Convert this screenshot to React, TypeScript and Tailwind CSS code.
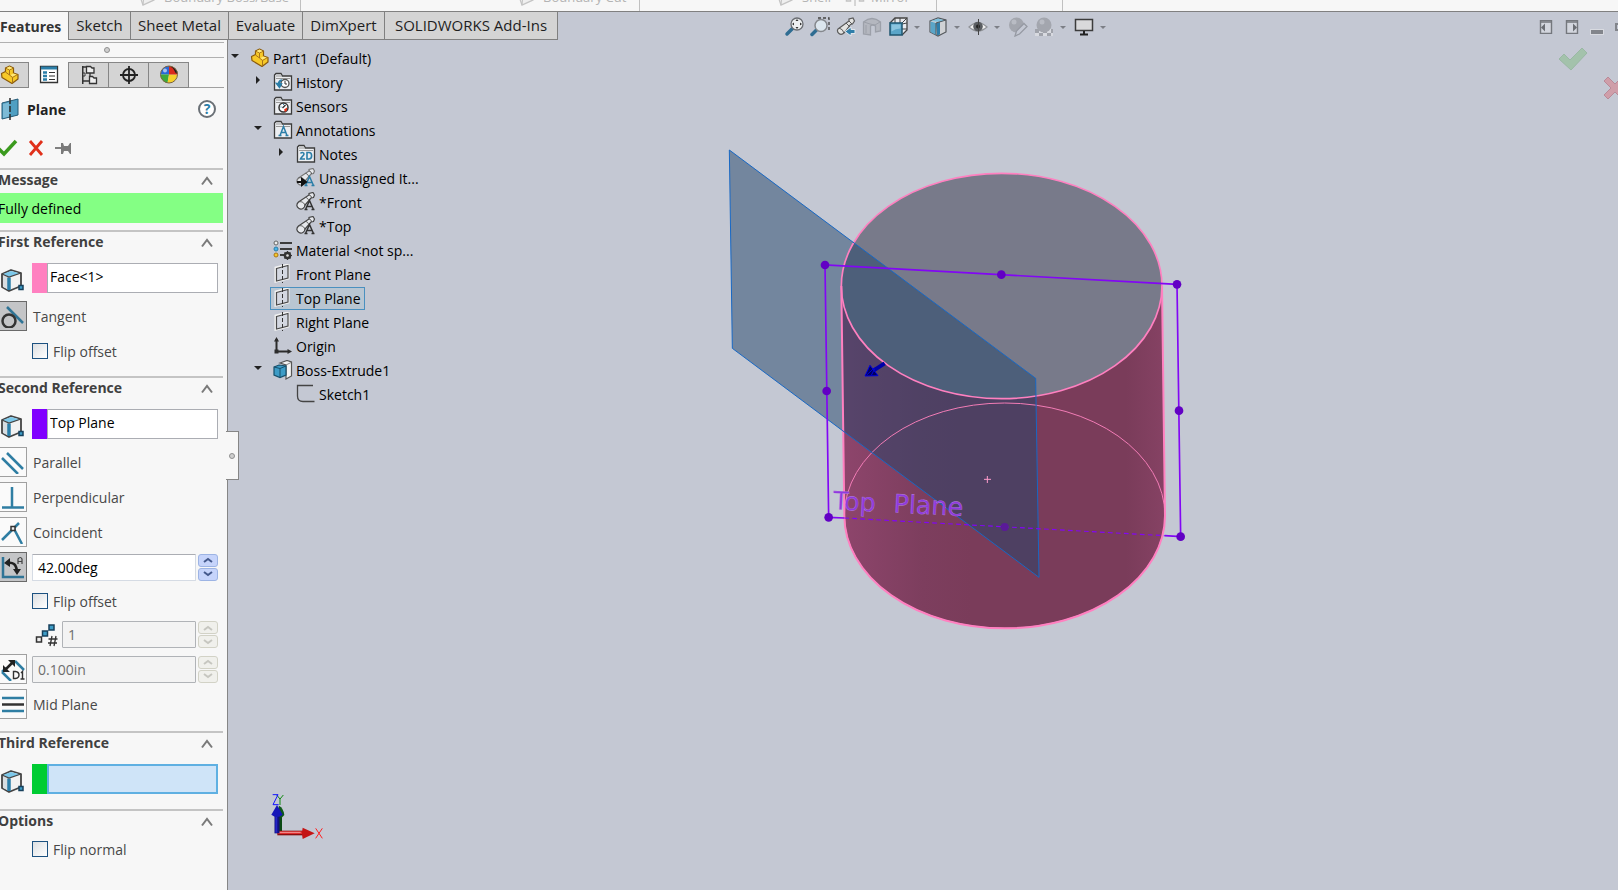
import { useState } from 'react'
import type { ReactNode } from 'react'

interface IconProps {
  size?: number
  className?: string
  children: ReactNode
}

function Icon({ size = 20, className = '', children }: IconProps) {
  return (
    <svg
      width={size}
      height={size}
      viewBox={`0 0 ${size} ${size}`}
      fill="none"
      aria-hidden="true"
      className={`shrink-0 ${className}`}
    >
      {children}
    </svg>
  )
}

/* ---------- shared glyphs ---------- */

function PartIcon() {
  return (
    <Icon>
      <path
        d="M1.5 8.5l4-2V3l4-2 4 2v5l4.500 1.500V14L12 18.500l-10-6z"
        fill="#f7c928"
        stroke="#8a5a0c"
        strokeWidth="1.2"
        strokeLinejoin="round"
      />
      <path d="M5.500 3l4 2 4-2M9.500 5v5l-4-3M9.500 10l3 2.500 5-3M12.500 12.500V18" stroke="#a8741a" />
      <path d="M6.500 3l3-1.500 3 1.500-3 1.500z" fill="#ffe97c" />
      <path d="M10.500 10l3-1.500 3 1-4 2z" fill="#ffe97c" />
    </Icon>
  )
}

function Folder({ children }: { children: ReactNode }) {
  return (
    <Icon>
      <path d="M1.5 18V3L3 1.5h5L9.5 4h9v14z" fill="#eceef1" stroke="#3c3c3c" strokeWidth="1.3" />
      <path d="M3 4h6M3 6.5h14" stroke="#9a9a9a" />
      {children}
    </Icon>
  )
}

function HistoryIcon() {
  return (
    <Folder>
      <circle cx="12" cy="11.5" r="4" fill="#fff" stroke="#555" strokeWidth="1.4" />
      <path d="M12 9v3h2" stroke="#333" />
      <path d="M9 8c-3 0-4 3-3 5M3.5 11.5l3 4 2-3.5z" stroke="#2b7ea8" strokeWidth="1.5" fill="#2b7ea8" />
    </Folder>
  )
}

function SensorsIcon() {
  return (
    <Folder>
      <circle cx="10.5" cy="11.5" r="4.5" fill="#fff" stroke="#333" strokeWidth="1.5" />
      <path d="M9.5 12l3-3" stroke="#333" strokeWidth="1.5" />
      <path d="M11 13.5l3-2v3L12 16z" fill="#e8321a" />
      <path d="M7.5 11h1M10 8.5h1" stroke="#2b7ea8" />
    </Folder>
  )
}

function AnnotationsIcon() {
  return (
    <Folder>
      <path d="M7 15.5l3.5-9 3.5 9M8 12.5h5M5.5 15.5h3M12.5 15.5h3" stroke="#2b7ea8" strokeWidth="1.5" />
    </Folder>
  )
}

function NotesIcon() {
  return (
    <Folder>
      <path
        d="M4.5 9.5c.5-1.5 3.5-1.5 3.5.5 0 1.5-3 3-3.5 5H9M11 8.5V15h2c3.5 0 3.5-6.5 0-6.5z"
        stroke="#2b7ea8"
        strokeWidth="1.6"
      />
    </Folder>
  )
}

function ViewIcon({ active = false }: { active?: boolean }) {
  return (
    <Icon>
      <path
        d="M2.5 10L13 3V1.5L17 .5l1.500 2.500-1 2.500-2.500.5L9 13c0 3-3.500 5-6 3.500s-3-4-.5-6.500z"
        fill="#e6e8ec"
        stroke={active ? '#777' : '#444'}
        strokeWidth="1.2"
      />
      <path d="M2.500 10c3-1 6 .5 6.500 4M13 3c1.500 0 2.500 1.500 2.500 3M9.500 5.500c1.500 0 3 1.500 3 3" stroke="#555" />
      <path
        d="M9.5 17.5l4-9 4 9M11 14.5h5M8.5 17.5h3M15.5 17.5h3"
        stroke={active ? '#2b7ea8' : '#333'}
        strokeWidth="1.5"
      />
      {active && <path d="M1 14h7M6 11l4 3-4 3z" stroke="#111" strokeWidth="2" fill="#111" />}
    </Icon>
  )
}

function MaterialIcon() {
  return (
    <Icon>
      <path d="M7 3h12M7 9h12M7 15h4" stroke="#3c3c3c" strokeWidth="1.8" />
      <circle cx="3" cy="3" r="2" fill="#eee" stroke="#666" />
      <circle cx="3" cy="9" r="2" fill="#4cb4e8" stroke="#2b7ea8" />
      <circle cx="3" cy="15" r="2" fill="#f7c928" stroke="#a8741a" />
      <circle cx="14.5" cy="15.5" r="2.8" stroke="#333" strokeWidth="2" />
      <path d="M14.5 11v9M10 15.5h9M11.5 12.5l6 6M17.5 12.5l-6 6" stroke="#333" strokeWidth="1.2" />
      <circle cx="14.5" cy="15.5" r="1.3" fill="#ddd" />
    </Icon>
  )
}

function PlaneIcon() {
  return (
    <Icon>
      <path d="M3 4l12-3v13L3 17z" fill="#d9dce4" stroke="#f2f2f2" strokeWidth="3" />
      <path d="M3.5 4.5L15 1.5V14L3.5 17z" fill="#d4d8e1" stroke="#4a4a4a" strokeWidth="1.2" />
      <path d="M9.5 0v19" stroke="#333" strokeDasharray="4 2" />
    </Icon>
  )
}

function OriginIcon() {
  return (
    <Icon>
      <path d="M3.5 3v12.5H16" stroke="#2c2c2c" strokeWidth="2" />
      <path d="M1 5.5L3.5 1 6 5.5zM14.5 13l4.5 2.5-4.5 2.5z" fill="#2c2c2c" />
      <path d="M1.5 13.5h4v4h-4z" fill="#2c2c2c" />
    </Icon>
  )
}

function ExtrudeIcon() {
  return (
    <Icon>
      <path d="M7 3l7-2.5L18.5 2v14L13 19V5z" fill="#f4f4f4" stroke="#555" strokeWidth="1.2" />
      <path d="M13 5l5-2.5" stroke="#888" />
      <path d="M1 7l5-2 7 1v9l-6 2.5L1 15z" fill="#3d9cc6" stroke="#17506c" strokeWidth="1.2" />
      <path d="M1 7l6 1.5L13 6M7 8.5v9" stroke="#17506c" />
    </Icon>
  )
}

function SketchIcon() {
  return (
    <Icon>
      <path d="M17 1.5H1.5V12q0 5.5 5.5 5.5h11.5" stroke="#444" strokeWidth="1.3" />
    </Icon>
  )
}

function ReferenceIcon() {
  return (
    <Icon size={24}>
      <path d="M2 6l9-4 10 3v13L9 23l-7-4z" fill="#f2f2f2" stroke="#444" strokeWidth="1.8" strokeLinejoin="round" />
      <path d="M3 6l8-3 9 2.5L9 9z" fill="#7cc8ea" />
      <path d="M3 6.5L9 9v13l-6-3z" fill="#d8dee2" />
      <path d="M9 9.5V22" stroke="#2b7ea8" strokeWidth="3.5" />
      <path d="M2 6l7 3 12-4" stroke="#444" strokeWidth="1.2" />
      <path d="M19 17.5h4v4h-4z" fill="#3d9cc6" stroke="#17405c" strokeWidth="1.5" />
    </Icon>
  )
}

/* ---------- ribbon ---------- */

function RibbonGlyph() {
  return (
    <Icon className="mr-[6px]">
      <path d="M1 6l4 12 11-5V2z" fill="#efefef" stroke="#c4c4c4" strokeWidth="1.3" />
      <path d="M5 18l1-9 10-6" stroke="#c4c4c4" />
    </Icon>
  )
}

function Ribbon() {
  const group = 'flex h-[26px] shrink-0 items-center border-r border-[#c0c0c0] pb-[3px]'
  const text = 'text-[13px] leading-[18px] text-[#b4b4b4]'
  return (
    <div className="flex h-[11px] items-end overflow-hidden bg-[#f7f7f7] whitespace-nowrap">
      <div className={`w-[301px] pl-[138px] ${group}`}>
        <RibbonGlyph />
        <span className={text}>Boundary Boss/Base</span>
      </div>
      <div className={`w-[339px] pl-[216px] ${group}`}>
        <RibbonGlyph />
        <span className={text}>Boundary Cut</span>
      </div>
      <div className={`w-[297px] pl-[136px] ${group}`}>
        <RibbonGlyph />
        <span className={text}>Shell</span>
        <Icon className="mr-[6px] ml-[14px]">
          <path d="M1.5 8h4v6h-4zM14.5 8h4v6h-4z" stroke="#c4c4c4" strokeWidth="1.5" />
          <path d="M10 0v19" stroke="#b4b4b4" />
        </Icon>
        <span className={text}>Mirror</span>
      </div>
      <div className={`w-[126px] ${group}`} />
    </div>
  )
}

const tabs = [
  { label: 'Sketch', width: 'w-[62px]' },
  { label: 'Sheet Metal', width: 'w-[98px]' },
  { label: 'Evaluate', width: 'w-[74px]' },
  { label: 'DimXpert', width: 'w-[82px]' },
  { label: 'SOLIDWORKS Add-Ins', width: 'w-[174px]' },
]

function Caret() {
  return <span className="mr-[2px] ml-[6px] border-x-[3px] border-t-[3px] border-x-transparent border-t-[#7c7f86]" />
}

function ToolButton({ label, caret = false, children }: { label: string; caret?: boolean; children: ReactNode }) {
  return (
    <button type="button" aria-label={label} className="flex items-center">
      {children}
      {caret && <Caret />}
    </button>
  )
}

function ViewToolbar() {
  return (
    <div className="ml-[226px] flex h-[30px] items-center gap-[6px]">
      <ToolButton label="Zoom to Fit">
        <Icon>
          <path d="M8.5 11.5L3 17" stroke="#2f6d92" strokeWidth="3.5" strokeLinecap="round" />
          <circle cx="13" cy="7" r="6" fill="#eef0f2" stroke="#6b6e73" strokeWidth="1.3" />
          <path d="M13 2l1.500 2h-3zM13 12l1.500-2h-3zM8 7l2-1.500v3zM18 7l-2-1.500v3z" fill="#333" />
        </Icon>
      </ToolButton>
      <ToolButton label="Zoom to Area">
        <Icon>
          <path d="M8 1h11v12" stroke="#444" strokeWidth="1.3" strokeDasharray="3 2" />
          <path d="M6.5 13L2 17.5" stroke="#2f6d92" strokeWidth="3.5" strokeLinecap="round" />
          <circle cx="11" cy="8.5" r="6" fill="#dce6ee" stroke="#85888d" strokeWidth="1.5" />
        </Icon>
      </ToolButton>
      <ToolButton label="Previous View">
        <Icon>
          <path
            d="M2 12L13 4V2l4-1 1.5 3-2 3-2 .5-6 8Q5.500 18.500 3 16.500T2 12z"
            fill="#e4e4e2"
            stroke="#5b5b5b"
            strokeWidth="1.2"
          />
          <path d="M3 11q4 1 5 5M10 6l4 4M13 4l3 3" stroke="#5b5b5b" />
          <path d="M19 12.5v4h-4V19l-6-4.5 6-4.5v2.5z" fill="#2f7ea9" stroke="#dfe6ec" />
        </Icon>
      </ToolButton>
      <ToolButton label="Section View">
        <Icon>
          <path d="M1.500 5q8.500-7 17 0v9l-5 1V9q-3-2-5 0v9l-7-1z" fill="#b4b7bf" stroke="#9ca0a9" strokeWidth="1.3" />
          <path d="M4 8v8M2 5l6 2 5 1 5-3" stroke="#9ca0a9" />
        </Icon>
      </ToolButton>
      <ToolButton label="View Orientation" caret>
        <Icon>
          <path d="M2 6l5-5h12v12l-5 5" fill="#e8eaee" stroke="#444" strokeWidth="1.3" />
          <path d="M7 1v6M12 1v5M19 6l-5 1M19 1l-5 5M14 12h5" stroke="#444" />
          <path d="M2 6h12v12H2z" fill="#5aa5c8" stroke="#1e5570" strokeWidth="1.5" />
          <path d="M3.5 7.5h9v4q-5 0-9 3z" fill="#8cc5df" />
        </Icon>
      </ToolButton>
      <ToolButton label="Display Style" caret>
        <Icon>
          <path d="M2 4l8-3 8 2v12l-8 4-8-4z" fill="#d0d2d5" stroke="#54585c" strokeWidth="1.2" />
          <path d="M2.5 4.5L8 6v12l-5.500-3z" fill="#5aa5c8" />
          <path d="M8 6l4-1v12.500L9 18.500z" fill="#2f7ea9" />
          <path d="M3 4l7-2.500 7 2-5 1.500z" fill="#7cc0de" />
          <path d="M8 6v12M8 6l10-3" stroke="#54585c" />
        </Icon>
      </ToolButton>
      <ToolButton label="Hide/Show Items" caret>
        <Icon>
          <path d="M1 10Q10 1 19 10 10 18 1 10z" fill="#f0f0f0" stroke="#8f9297" strokeWidth="1.2" />
          <circle cx="10" cy="9.5" r="4.8" fill="#5a5d61" />
          <circle cx="10" cy="9.5" r="2" fill="#222" />
          <path d="M10.500 2v16" stroke="#444" />
        </Icon>
      </ToolButton>
      <ToolButton label="Edit Appearance">
        <Icon>
          <circle cx="8.5" cy="8" r="7.5" fill="#a3a6ae" />
          <circle cx="6" cy="5" r="2.5" fill="#b9bcc4" />
          <path d="M7 19l1.500-5L16 6.500l3 3-7.500 7.500z" fill="#c4c8d3" stroke="#969aa3" strokeWidth="1.3" />
        </Icon>
      </ToolButton>
      <ToolButton label="Apply Scene" caret>
        <Icon>
          <path d="M1 12h18v7H1z" fill="#d8dae0" />
          <path d="M1 12h4v4H1zM9 12h4v4H9zM5 16h4v3H5zM13 16h4v3h-4zM17 12h2v4h-2z" fill="#a0a3ab" />
          <circle cx="10" cy="8" r="7.5" fill="#a3a6ae" />
          <circle cx="8" cy="5" r="2.5" fill="#b9bcc4" />
        </Icon>
      </ToolButton>
      <ToolButton label="View Settings" caret>
        <Icon>
          <path d="M1.5 2.500h17v11h-17z" fill="#d9d9db" stroke="#3c3c3c" strokeWidth="1.5" />
          <path d="M10 14v3M6 17.500h8" stroke="#222" strokeWidth="2" />
        </Icon>
      </ToolButton>
    </div>
  )
}

function WindowControls() {
  return (
    <div className="ml-auto flex h-[30px] items-center overflow-hidden">
      <button type="button" aria-label="Collapse left pane" className="mr-[12px]">
        <Icon size={14}>
          <path d="M1.5.5h11v13h-11z" fill="#d3d6de" stroke="#74777d" strokeWidth="1.4" />
          <path d="M2 2h10" stroke="#74777d" strokeWidth="1.5" />
          <path d="M2 7.5l4-4v8z" fill="#6a6d73" />
        </Icon>
      </button>
      <button type="button" aria-label="Collapse right pane" className="mr-[12px]">
        <Icon size={14}>
          <path d="M1.5.5h11v13h-11z" fill="#d3d6de" stroke="#74777d" strokeWidth="1.4" />
          <path d="M2 2h10" stroke="#74777d" strokeWidth="1.5" />
          <path d="M12 7.5l-4-4v8z" fill="#6a6d73" />
        </Icon>
      </button>
      <button type="button" aria-label="Minimize" className="mr-[12px] flex h-[14px] items-end">
        <span className="h-[4px] w-[12px] bg-[#82858b] outline outline-[#d8dae0]" />
      </button>
      <button type="button" aria-label="Restore" className="h-[8px] w-[3px] border-y-2 border-l-2 border-[#82858b]" />
    </div>
  )
}

/* ---------- property manager ---------- */

function Section({ title, children }: { title: string; children?: ReactNode }) {
  const [open, setOpen] = useState(true)
  return (
    <section className="mr-[4px] border-t-2 border-[#c4c4c4]">
      <button
        type="button"
        onClick={() => setOpen(!open)}
        className="flex h-[21px] w-full items-center justify-between pr-[9px] text-[14px] font-bold text-[#404040]"
      >
        <span className="-ml-[2px] pb-[2px]">{title}</span>
        <Icon size={14}>
          <path d={open ? 'M2 10.500L7 4l5 6.500' : 'M2 4l5 6.500L12 4'} stroke="#7a7a7a" strokeWidth="2" />
        </Icon>
      </button>
      {open && children}
    </section>
  )
}

interface SelectionBoxProps {
  label: string
  value: string
  swatch: string
  active?: boolean
}

function SelectionBox({ label, value, swatch, active = false }: SelectionBoxProps) {
  return (
    <label className="mr-[5px] flex h-[30px] items-center">
      <span className="w-[32px] pt-[4px]">
        <ReferenceIcon />
      </span>
      <span className={`h-full w-[15px] shrink-0 ${swatch}`} />
      <input
        aria-label={label}
        defaultValue={value}
        className={`h-full min-w-0 flex-1 pb-[4px] pl-[2px] text-[14px] text-black outline-none ${
          active ? 'border-2 border-[#5fb0e2] bg-[#cfe4f8]' : 'border border-[#abadb3] bg-white'
        }`}
      />
    </label>
  )
}

function RelationFace({ pressed = false, children }: { pressed?: boolean; children: ReactNode }) {
  return (
    <span
      className={`flex h-[30px] w-[27px] shrink-0 items-center border border-l-0 pl-px ${
        pressed ? 'border-[#6a6a6a] bg-[#c4c5c7]' : 'border-[#a0a0a0] bg-[#fafafa]'
      }`}
    >
      {children}
    </span>
  )
}

function Relation({ label, pressed = false, children }: { label: string; pressed?: boolean; children: ReactNode }) {
  return (
    <button
      type="button"
      aria-pressed={pressed}
      className="flex h-[30px] items-center gap-[6px] text-[14px] text-[#484848]"
    >
      <RelationFace pressed={pressed}>{children}</RelationFace>
      {label}
    </button>
  )
}

function CheckRow({ label, className }: { label: string; className: string }) {
  return (
    <label className={`flex h-[18px] items-center gap-[5px] pl-[32px] text-[14px] text-[#484848] ${className}`}>
      <input
        type="checkbox"
        className="h-[16px] w-[16px] appearance-none border border-[#1c5180] bg-linear-to-br from-[#dcdfe2] to-white checked:bg-[#1c5180]"
      />
      {label}
    </label>
  )
}

function Spinner({ label, disabled }: { label: string; disabled: boolean }) {
  const face = disabled ? 'border-[#d2d2c6] bg-[#f0f0ec]' : 'border-[#9db4e4] bg-[#c6d4fb]'
  const stroke = disabled ? '#c6c6c0' : '#44598c'
  const button = `flex h-[13px] items-center justify-center rounded-[3px] border ${face}`
  return (
    <span className="flex h-[27px] w-[20px] shrink-0 flex-col justify-between">
      <button type="button" disabled={disabled} aria-label={`Increase ${label}`} className={button}>
        <Icon size={10}>
          <path d="M1 7l4-3 4 3" stroke={stroke} strokeWidth="2" />
        </Icon>
      </button>
      <button type="button" disabled={disabled} aria-label={`Decrease ${label}`} className={button}>
        <Icon size={10}>
          <path d="M1 3l4 3 4-3" stroke={stroke} strokeWidth="2" />
        </Icon>
      </button>
    </span>
  )
}

function NumberField({ label, value, disabled = false }: { label: string; value: string; disabled?: boolean }) {
  return (
    <>
      <input
        aria-label={label}
        defaultValue={value}
        disabled={disabled}
        className={`mr-[2px] h-[27px] min-w-0 flex-1 rounded-[1px] border pl-[5px] text-[14px] outline-none ${
          disabled
            ? 'border-[#b0b3b7] bg-[#f3f3f3] text-[#6e6e6e]'
            : 'border-[#d5dbe4] border-t-[#abadb3] bg-white text-black'
        }`}
      />
      <Spinner label={label} disabled={disabled} />
    </>
  )
}

function ManagerTabs() {
  const off = 'flex h-[26px] items-center justify-center border-t border-r border-b border-[#868686] bg-[#d4d4d4]'
  return (
    <div className="mt-[4px] mr-[3px] flex items-end">
      <button type="button" aria-label="FeatureManager" className={`w-[29px] pr-[9px] ${off}`}>
        <PartIcon />
      </button>
      <button
        type="button"
        aria-label="PropertyManager"
        className="flex h-[26px] w-[40px] items-center justify-center border-r border-[#868686]"
      >
        <Icon>
          <path d="M1.500 1.5h17v16h-17z" fill="#fff" stroke="#333" strokeWidth="1.3" />
          <path d="M2 3h16" stroke="#2b7ea8" strokeWidth="3" />
          <path d="M4 7.5h4M4 11h4M4 14.500h4" stroke="#2b7ea8" strokeWidth="2.4" />
          <path d="M10 7.5h6M10 11h6M10 14.500h6" stroke="#333" strokeWidth="1.2" />
        </Icon>
      </button>
      <button type="button" aria-label="ConfigurationManager" className={`w-[40px] ${off}`}>
        <Icon>
          <path d="M4 1v18M3.500 1v18" stroke="#333" />
          <path d="M4 2h4M4 16h6M11 8v4" stroke="#333" strokeWidth="1.3" />
          <path d="M7.500 1.500h4l1.500 1.500h2v5H7.500zM10.500 11.500h3l1.500 1.500h2.500v5.500h-7z" fill="#eee" stroke="#333" strokeWidth="1.3" />
          <path d="M4 8h2v3H4z" fill="#eee" stroke="#333" />
        </Icon>
      </button>
      <button type="button" aria-label="DimXpertManager" className={`w-[40px] ${off}`}>
        <Icon>
          <circle cx="10" cy="10" r="6" stroke="#222" strokeWidth="1.8" />
          <path d="M10 1v18M1 10h18" stroke="#222" strokeWidth="1.8" />
        </Icon>
      </button>
      <button type="button" aria-label="DisplayManager" className={`w-[40px] ${off}`}>
        <Icon>
          <path d="M10 9.5V1A8.5 8.5 0 0 0 1.5 9.5z" fill="#2968d8" />
          <path d="M10 9.5H1.5c0 4 3 8 7 8.500z" fill="#3da93a" />
          <path d="M10 9.5L8.500 18c5 .5 9-3 10-8.500z" fill="#f5cf2a" />
          <path d="M10 9.5V1c5 0 8.500 4 8.500 8.500z" fill="#d92a1c" />
          <path d="M9 1q5 1 6 4t3.500 4Q19 2 9 1z" fill="#1c1c1c" />
          <circle cx="6" cy="5.5" r="2" fill="#fff" opacity=".6" />
          <circle cx="10" cy="9.5" r="8.5" stroke="#7a6440" />
        </Icon>
      </button>
      <span className="flex-1 border-b border-[#a0a0a0]" />
    </div>
  )
}

function PropertyManager() {
  return (
    <aside className="relative w-[228px] shrink-0 border-r border-[#868686] bg-[#f7f7f7]">
      <div className="mt-[2px] mr-[3px] flex h-[16px] items-center justify-center border-y border-[#b0b0b0] pr-[11px]">
        <span className="h-[6px] w-[6px] rounded-full border border-[#909090] bg-[#cfcfcf]" />
      </div>
      <ManagerTabs />
      <div className="mt-[9px] flex h-[24px] items-center pr-[11px]">
        <Icon size={24} className="mr-[3px]">
          <path d="M2 6l16-4v16L2 22z" fill="#4f9fc2" stroke="#245a76" />
          <path d="M3 7l6-1.5v14L3 21z" fill="#7dbbd6" />
          <path d="M10 1v22" stroke="#2c2c2c" strokeWidth="1.5" strokeDasharray="6 2" />
        </Icon>
        <h1 className="text-[14px] font-bold text-[#222]">Plane</h1>
        <button
          type="button"
          aria-label="Help"
          className="ml-auto flex h-[18px] w-[18px] items-center justify-center rounded-full border-2 border-[#6a7076] bg-white text-[14px] leading-none font-bold text-[#2b7ea8]"
        >
          ?
        </button>
      </div>
      <div className="mt-[17px] mb-[10px] flex h-[20px] items-center">
        <button type="button" aria-label="OK">
          <Icon size={18}>
            <path d="M-2 9l6 6L16 2" stroke="#3b9a1e" strokeWidth="3.5" />
          </Icon>
        </button>
        <button type="button" aria-label="Cancel" className="ml-[10px]">
          <Icon size={16}>
            <path d="M2 1l12 14M14 1L2 15" stroke="#e0301a" strokeWidth="2.8" />
          </Icon>
        </button>
        <button type="button" aria-label="Keep visible" className="ml-[10px]">
          <Icon size={18}>
            <path d="M1 9h8" stroke="#808080" strokeWidth="2" />
            <path d="M7 4h2l1 3h4l2-3h1v11h-1l-2-3h-4l-1 3H7z" fill="#7a7a7a" />
          </Icon>
        </button>
      </div>

      <Section title="Message">
        <p className="mt-[2px] mb-[7px] flex h-[30px] items-center bg-[#84ff84] text-[14px] text-black">
          <span className="-ml-[2px]">Fully defined</span>
        </p>
      </Section>

      <Section title="First Reference">
        <div className="flex flex-col pt-[10px] pb-[16px]">
          <SelectionBox label="First reference" value="Face<1>" swatch="bg-[#ff80c0]" />
          <div className="mt-[8px] flex flex-col">
            <Relation label="Tangent" pressed>
              <Icon size={24}>
                <path d="M6 3l16 16" stroke="#2f7496" strokeWidth="2.5" />
                <circle cx="8" cy="17" r="6.5" stroke="#333" strokeWidth="2.5" />
              </Icon>
            </Relation>
          </div>
          <CheckRow label="Flip offset" className="mt-[11px]" />
        </div>
      </Section>

      <Section title="Second Reference">
        <div className="flex flex-col pt-[10px] pb-[12px]">
          <SelectionBox label="Second reference" value="Top Plane" swatch="bg-[#8000ff]" />
          <div className="mt-[8px] flex flex-col gap-[5px]">
            <Relation label="Parallel">
              <Icon size={24}>
                <path d="M6 3l16 16M1 8l16 16" stroke="#2f7ea3" strokeWidth="2.5" />
              </Icon>
            </Relation>
            <Relation label="Perpendicular">
              <Icon size={24}>
                <path d="M11 2v20M1 22.500h22" stroke="#2f7ea3" strokeWidth="2.5" />
              </Icon>
            </Relation>
            <Relation label="Coincident">
              <Icon size={24}>
                <path d="M1 20L18 3M12 7l9 17" stroke="#2f7ea3" strokeWidth="2.5" />
                <path d="M10 6.500h4v4h-4z" fill="#eee" stroke="#333" strokeWidth="1.5" />
              </Icon>
            </Relation>
            <div className="mr-[5px] flex items-center">
              <button type="button" aria-label="At angle" aria-pressed className="mr-[5px]">
                <RelationFace pressed>
                  <Icon size={24}>
                    <path d="M2 2v20h21" stroke="#2f7496" strokeWidth="2.5" />
                    <path d="M6 8q9-2 10 8" stroke="#222" strokeWidth="2.5" />
                    <path d="M3 8l6-5v9zM12 14h8l-4 6z" fill="#222" />
                    <path d="M17 9V4q2.500-3 4 0v5M17 6.500h4" stroke="#444" strokeWidth="1.2" />
                  </Icon>
                </RelationFace>
              </button>
              <NumberField label="Angle" value="42.00deg" />
            </div>
          </div>
          <CheckRow label="Flip offset" className="mt-[10px]" />
          <div className="mt-[11px] mr-[5px] flex items-center">
            <Icon size={24} className="mr-[3px] ml-[35px]">
              <path d="M1.500 14h5v5h-5z" fill="#eee" stroke="#333" strokeWidth="1.5" />
              <path d="M7.500 8h5v5h-5zM14 2h5v5h-5z" fill="#3d9cc6" stroke="#17405c" strokeWidth="1.5" />
              <path d="M17 13l-2 10M21 13l-2 10M13.500 16h9M13 20h9" stroke="#333" strokeWidth="1.3" />
            </Icon>
            <NumberField label="Instances" value="1" disabled />
          </div>
          <div className="mt-[6px] mr-[5px] flex items-center">
            <button type="button" aria-label="Offset distance" className="mr-[5px]">
              <RelationFace>
                <Icon size={24}>
                  <path d="M14 4l9 9M1 15l9 9M1 15l4-4" stroke="#2f7ea3" strokeWidth="2.5" />
                  <path d="M5 12l7-7" stroke="#222" strokeWidth="2.5" />
                  <path d="M2 8v7h7zM7 3h7v7z" fill="#222" />
                  <path
                    d="M12.500 14.500v7h2q3.500-.5 3.500-3.500t-3.500-3.500zM20 16l1.500-1.500v8M19.500 22h4"
                    fill="#fafafa"
                    stroke="#333"
                    strokeWidth="1.4"
                  />
                </Icon>
              </RelationFace>
            </button>
            <NumberField label="Offset" value="0.100in" disabled />
          </div>
          <div className="mt-[5px] flex flex-col">
            <Relation label="Mid Plane">
              <Icon size={24}>
                <path d="M1 6h22M1 19h22" stroke="#2f7ea3" strokeWidth="2.5" />
                <path d="M1 12.500h22" stroke="#333" strokeWidth="2.5" />
              </Icon>
            </Relation>
          </div>
        </div>
      </Section>

      <Section title="Third Reference">
        <div className="pt-[10px] pb-[15px]">
          <SelectionBox label="Third reference" value="" swatch="bg-[#00cc33]" active />
        </div>
      </Section>

      <Section title="Options">
        <CheckRow label="Flip normal" className="mt-[8px]" />
      </Section>

      <button
        type="button"
        aria-label="Collapse panel"
        className="absolute top-[391px] left-full -ml-px flex h-[49px] w-[13px] items-center justify-center border border-l-0 border-[#868686] bg-[#f7f7f7]"
      >
        <span className="h-[6px] w-[6px] rounded-full border border-[#909090] bg-[#cfcfcf]" />
      </button>
    </aside>
  )
}

/* ---------- feature tree ---------- */

interface TreeNode {
  label: string
  level: 0 | 1 | 2
  icon: ReactNode
  arrow?: 'open' | 'closed'
}

const tree: TreeNode[] = [
  { label: 'Part1  (Default)', level: 0, icon: <PartIcon />, arrow: 'open' },
  { label: 'History', level: 1, icon: <HistoryIcon />, arrow: 'closed' },
  { label: 'Sensors', level: 1, icon: <SensorsIcon /> },
  { label: 'Annotations', level: 1, icon: <AnnotationsIcon />, arrow: 'open' },
  { label: 'Notes', level: 2, icon: <NotesIcon />, arrow: 'closed' },
  { label: 'Unassigned It...', level: 2, icon: <ViewIcon active /> },
  { label: '*Front', level: 2, icon: <ViewIcon /> },
  { label: '*Top', level: 2, icon: <ViewIcon /> },
  { label: 'Material <not sp...', level: 1, icon: <MaterialIcon /> },
  { label: 'Front Plane', level: 1, icon: <PlaneIcon /> },
  { label: 'Top Plane', level: 1, icon: <PlaneIcon /> },
  { label: 'Right Plane', level: 1, icon: <PlaneIcon /> },
  { label: 'Origin', level: 1, icon: <OriginIcon /> },
  { label: 'Boss-Extrude1', level: 1, icon: <ExtrudeIcon />, arrow: 'open' },
  { label: 'Sketch1', level: 2, icon: <SketchIcon /> },
]

const indent = ['pl-[2px]', 'pl-[25px]', 'pl-[48px]']

function FeatureTree() {
  const [selected, setSelected] = useState('Top Plane')
  return (
    <ul className="pt-[6px]">
      {tree.map((node) => (
        <li key={node.label} className={`flex h-[24px] items-center ${indent[node.level]}`}>
          <span className="flex w-[17px] shrink-0 pb-[4px]">
            {node.arrow && (
              <Icon size={10}>
                <path d={node.arrow === 'open' ? 'M1 3h8L5 7z' : 'M3 1l4 4-4 4z'} fill="#222" />
              </Icon>
            )}
          </span>
          <button
            type="button"
            onClick={() => setSelected(node.label)}
            className={`flex h-[23px] items-center gap-[3px] border pr-[3px] pl-[2px] text-[14px] whitespace-pre text-black ${
              selected === node.label ? 'border-[#4a90bf] bg-[#b9c6d2]' : 'border-transparent'
            }`}
          >
            {node.icon}
            {node.label}
          </button>
        </li>
      ))}
    </ul>
  )
}

function Triad() {
  return (
    <svg width="60" height="50" viewBox="0 0 180 150" aria-label="Orientation triad" className="mb-[46px] ml-[40px]">
      <path d="M36 120V60" stroke="#0c4a14" strokeWidth="12" />
      <path d="M26 65L33 35q14 8 16 28l-8 8z" fill="#0e5a1a" />
      <path d="M36 33V14M26 3l10 12L46 3" stroke="#108a10" strokeWidth="3" fill="none" />
      <path d="M28 117h80" stroke="#8a0f0f" strokeWidth="14" />
      <path d="M28 116h82" stroke="#e03030" strokeWidth="8" />
      <path d="M28 115h70" stroke="#f49a9a" strokeWidth="3" />
      <path d="M104 101l36 17-36 17q-5-17 0-34z" fill="#c41414" />
      <path d="M27 118V62" stroke="#10107c" strokeWidth="15" />
      <path d="M25 116V62" stroke="#2424c8" strokeWidth="6" />
      <path d="M27 33L10 62q17 14 34 0z" fill="#1616b8" />
      <path d="M14 2h16L15 32h17" stroke="#1414ff" strokeWidth="3" fill="none" />
      <path d="M143 103l20 30M163 103l-20 30" stroke="#ff2020" strokeWidth="3" />
    </svg>
  )
}

/* ---------- graphics area ---------- */

const handles = [
  [345, 405],
  [874, 434],
  [1401, 463],
  [350, 783],
  [1407, 842],
  [356, 1162],
  [1412, 1220],
]

function Model() {
  return (
    <svg
      width="500"
      height="520"
      viewBox="0 0 1500 1560"
      fill="none"
      aria-label="Model view"
      className="mt-[90px] shrink-0"
    >
      <defs>
        <linearGradient id="side" x1="0" x2="1" y1="0" y2="0">
          <stop offset="0" stopColor="#8e456c" />
          <stop offset=".25" stopColor="#7d3e5e" />
          <stop offset=".4" stopColor="#7a3c5a" />
          <stop offset=".88" stopColor="#7a3c5a" />
          <stop offset="1" stopColor="#864264" />
        </linearGradient>
      </defs>
      <path d="M394 468L403 1157A481 338 0 0 0 1365 1157L1356 468z" fill="url(#side)" />
      <ellipse cx="875" cy="468" rx="481" ry="338" fill="#787a8a" />
      <path d="M58 60L977 745L987 1342L67 655z" fill="#224469" fillOpacity=".5" />
      <ellipse cx="884" cy="1157" rx="481" ry="338" stroke="#f27cb6" strokeWidth="3" />
      <path d="M394 468L403 1157A481 338 0 0 0 1365 1157L1356 468" stroke="#ff80c0" strokeWidth="6" />
      <ellipse cx="875" cy="468" rx="481" ry="338" stroke="#ff80c0" strokeWidth="5" />
      <path d="M58 60L977 745L987 1342L67 655z" stroke="#1868c4" strokeWidth="3" />

      <path d="M403 1164L356 1162L345 405L1401 463L1412 1220L1364 1217" stroke="#8206f5" strokeWidth="5" />
      <path d="M403 1164L1364 1217" stroke="#8206f5" strokeWidth="3.5" strokeDasharray="14 10" />
      <circle cx="884" cy="1191" r="12" fill="#5a1a98" />
      {handles.map(([cx, cy]) => (
        <circle key={`${cx}-${cy}`} cx={cx} cy={cy} r="13" fill="#6200c4" />
      ))}

      <g fill="#9038e0" stroke="#b68ad8" strokeWidth="1" fontSize="76" fontFamily="DejaVu Sans, sans-serif">
        <text x="368" y="1138" transform="rotate(3 368 1138)">
          Top
        </text>
        <text x="550" y="1147" transform="rotate(3 550 1147)">
          Plane
        </text>
      </g>

      <path d="M822 1048h21M832 1038v21" stroke="#ff9ccc" strokeWidth="3" />
      <path d="M524 700l-34 22" stroke="#0000a8" strokeWidth="12" />
      <path d="M465 738l15-32 24 31z" fill="#000060" stroke="#0000e0" strokeWidth="3" />
      <path d="M470 735l24-22M484 736l10-20" stroke="#0000e0" strokeWidth="3" />
    </svg>
  )
}

function ConfirmationCorner() {
  return (
    <div className="ml-auto flex flex-col items-end overflow-hidden pt-[6px]">
      <button type="button" aria-label="Accept" className="mr-[30px]">
        <Icon size={30}>
          <path d="M1 13l5-5 6 6L24 2l5 5-16 17z" fill="#a3c2ab" stroke="#9ab8a4" />
        </Icon>
      </button>
      <button type="button" aria-label="Cancel" className="-mr-[10px]">
        <Icon size={26}>
          <path d="M2 5l4-4 7 7 7-7 4 4-7 7 7 7-4 4-7-7-7 7-4-4 7-7z" fill="#cf9ea9" stroke="#b98a98" />
        </Icon>
      </button>
    </div>
  )
}

export default function App() {
  return (
    <div className="flex min-h-screen flex-col overflow-hidden bg-[#c4c8d3] font-['Open_Sans','Noto_Sans',sans-serif]">
      <Ribbon />
      <header className="flex h-[29px]">
        <nav className="flex shrink-0 text-[15px] whitespace-nowrap text-[#1e1e1e]">
          <button
            type="button"
            className="w-[68px] border-t border-[#808080] bg-[#f7f7f7] text-left text-[14px] font-bold text-[#333]"
          >
            Features
          </button>
          {tabs.map((tab) => (
            <button
              key={tab.label}
              type="button"
              className={`border-y border-l border-[#808080] bg-[#d4d4d4] last:border-r ${tab.width}`}
            >
              {tab.label}
            </button>
          ))}
        </nav>
        <div className="flex flex-1 border-t border-[#808080]">
          <ViewToolbar />
          <WindowControls />
        </div>
      </header>
      <div className="flex flex-1">
        <PropertyManager />
        <main className="flex min-w-0 flex-1">
          <div className="flex w-[482px] shrink-0 flex-col justify-between">
            <FeatureTree />
            <Triad />
          </div>
          <Model />
          <ConfirmationCorner />
        </main>
      </div>
    </div>
  )
}
